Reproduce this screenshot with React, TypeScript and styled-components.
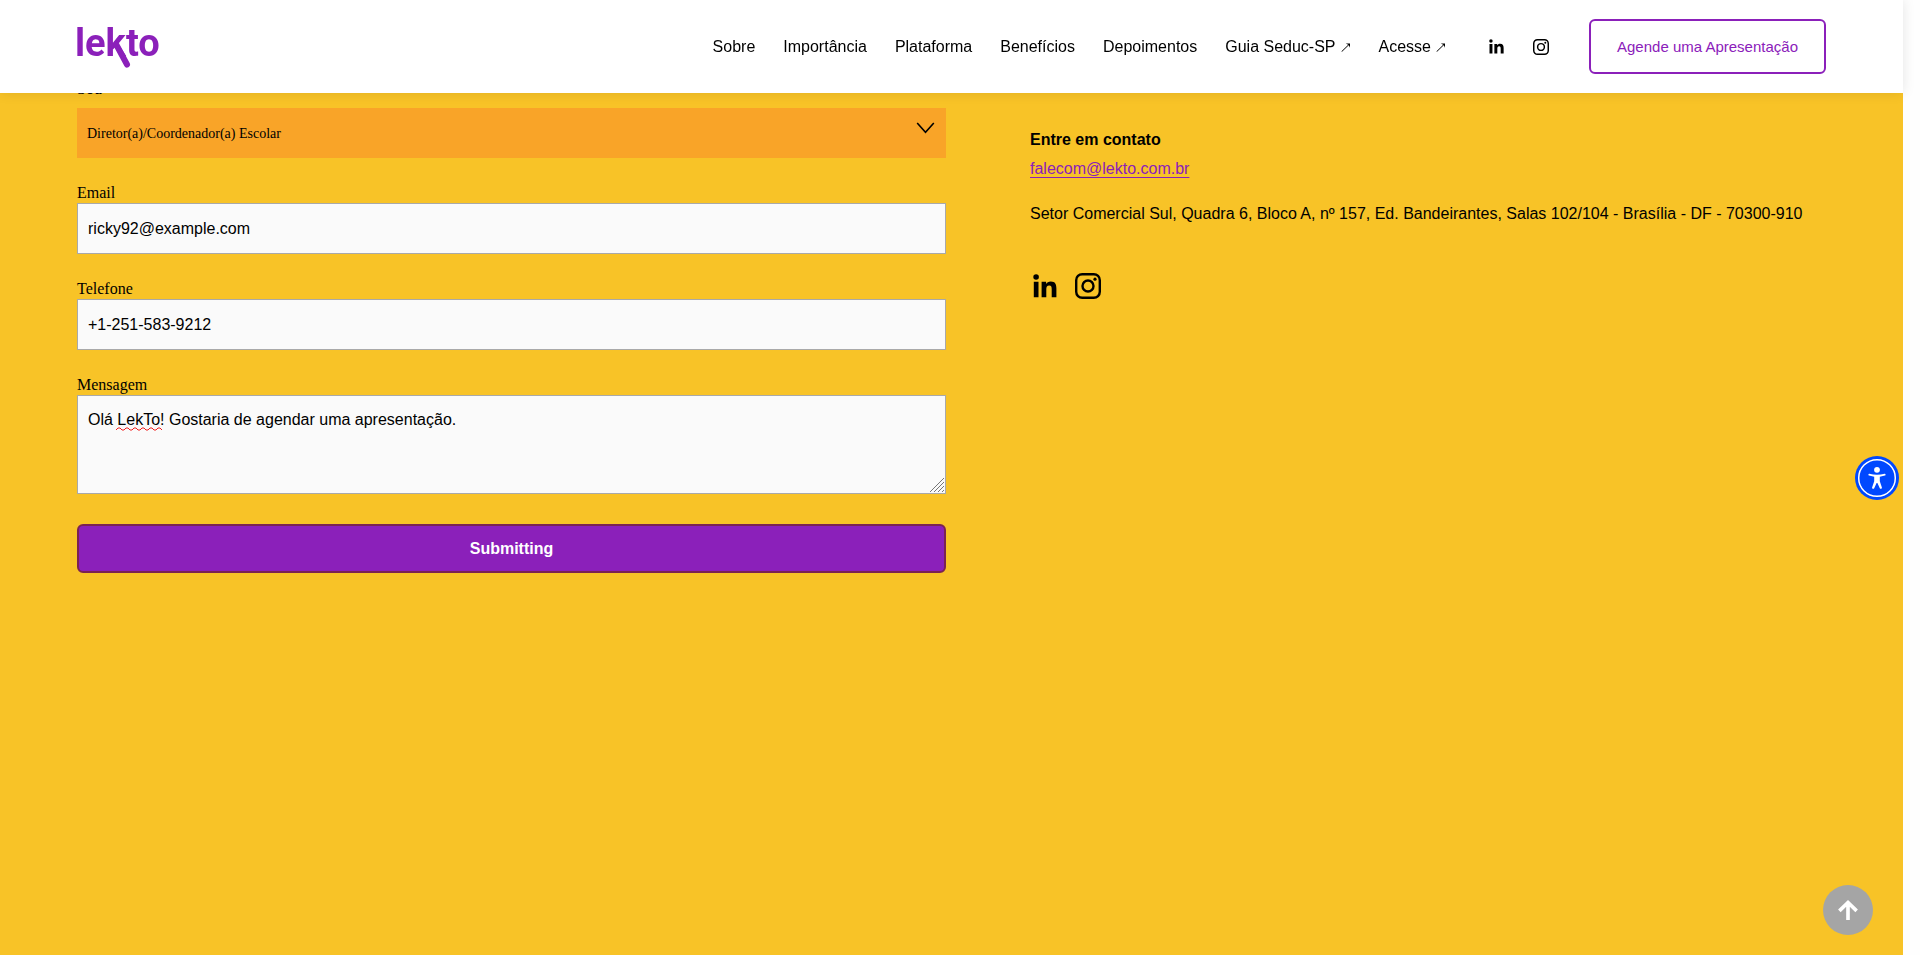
import React from 'react';
import styled, { createGlobalStyle } from 'styled-components';

const purple = '#8b20ba';
const gutter = 17;

const GlobalStyle = createGlobalStyle`
  *, *::before, *::after { box-sizing: border-box; }
  body {
    margin: 0;
    background: #fefefe;
    color: #000;
    font-family: 'Liberation Sans', Arial, sans-serif;
    font-size: 16px;
  }
`;

const Header = styled.header`
  position: fixed;
  z-index: 2;
  top: 0;
  left: 0;
  right: ${gutter}px;
  min-height: 93px;
  padding: 0 77px 0 75px;
  display: flex;
  align-items: center;
  justify-content: space-between;
  background: #fff;
  box-shadow: 0 0 12px rgba(0, 0, 0, 0.1);
`;

const LogoLink = styled.a`
  display: flex;
  text {
    font-family: Roboto, sans-serif;
    font-size: 38px;
    font-weight: 700;
  }
`;

const HeaderActions = styled.div`
  display: flex;
  align-items: center;
`;

const Nav = styled.nav`
  display: flex;
  gap: 28px;
  margin-right: 43px;
`;

const NavLink = styled.a`
  display: flex;
  align-items: center;
  gap: 5px;
  padding-top: 1px;
  color: #000;
  line-height: 20px;
  white-space: nowrap;
  text-decoration: none;
`;

const SocialLinks = styled.div<{ $gap: number }>`
  display: flex;
  align-items: center;
  gap: ${({ $gap }) => $gap}px;
`;

const SocialLink = styled.a`
  display: flex;
  color: #000;
`;

const OutlineButton = styled.button`
  height: 55px;
  width: 237px;
  margin-left: 40px;
  padding: 0;
  border: 2px solid ${purple};
  border-radius: 6px;
  background: #fff;
  color: ${purple};
  font: 15px/20px 'Liberation Sans', Arial, sans-serif;
  cursor: pointer;
`;

const Main = styled.main`
  min-height: 100vh;
  margin-right: ${gutter}px;
  padding: 79px 77px;
  display: grid;
  grid-template-columns: 869fr 796fr;
  column-gap: 84px;
  align-items: start;
  background: #f8c327;
`;

const Form = styled.form`
  display: flex;
  flex-direction: column;
  gap: 25px;
`;

const Field = styled.div<{ $gap?: number }>`
  display: flex;
  flex-direction: column;
  gap: ${({ $gap = 0 }) => $gap}px;
`;

const Label = styled.label`
  font: 16px/20px 'Liberation Serif', 'Times New Roman', serif;
`;

const ControlWrap = styled.div`
  position: relative;
  display: flex;
`;

const Select = styled.select`
  appearance: none;
  width: 100%;
  height: 50px;
  padding: 2px 10px 0;
  border: 0;
  border-radius: 0;
  background: #f9a428;
  color: #000;
  font: 14px/20px 'Liberation Serif', 'Times New Roman', serif;
`;

const Chevron = styled.svg`
  position: absolute;
  top: 14px;
  right: 11px;
  pointer-events: none;
`;

const Input = styled.input`
  width: 100%;
  height: 51px;
  padding: 0 10px;
  border: 1px solid #a9a9a9;
  border-radius: 0;
  background: #fafafa;
  color: #000;
  font: 16px/20px 'Liberation Sans', Arial, sans-serif;
`;

const TextArea = styled.textarea`
  width: 100%;
  height: 99px;
  padding: 14px 10px;
  border: 1px solid #a9a9a9;
  border-radius: 0;
  background: #fafafa;
  color: #000;
  font: 16px/20px 'Liberation Sans', Arial, sans-serif;
  resize: vertical;
  &::-webkit-resizer {
    background: transparent;
  }
`;

const ResizeGrip = styled.svg`
  position: absolute;
  right: 2px;
  bottom: 2px;
  pointer-events: none;
`;

const SpellingMark = styled.svg`
  position: absolute;
  left: 39px;
  top: 32px;
  pointer-events: none;
`;

const SubmitButton = styled.button`
  height: 49px;
  margin-top: 5px;
  border: 2px solid #7b2352;
  border-radius: 6px;
  background: ${purple};
  color: #fff;
  font: 700 16px/20px 'Liberation Sans', Arial, sans-serif;
  cursor: pointer;
`;

const Contact = styled.section`
  padding-top: 46px;
  line-height: 29px;
`;

const ContactTitle = styled.h2`
  margin: 0;
  font-size: 16px;
  line-height: 29px;
`;

const Paragraph = styled.p`
  margin: 0 0 16px;
`;

const MailLink = styled.a`
  color: ${purple};
  text-decoration: underline;
  text-decoration-thickness: 1px;
  text-underline-offset: 3px;
`;

const ContactSocial = styled.div`
  margin-top: 45px;
  padding-left: 3px;
`;

const AccessibilityButton = styled.button`
  position: fixed;
  z-index: 3;
  right: 21px;
  top: calc(50% - 22px);
  width: 44px;
  height: 44px;
  padding: 0;
  border: 0;
  border-radius: 50%;
  background: #0048ff;
  cursor: pointer;
`;

const TopButton = styled.button`
  position: fixed;
  z-index: 3;
  right: 47px;
  bottom: 20px;
  width: 50px;
  height: 50px;
  padding: 0;
  display: grid;
  place-items: center;
  border: 0;
  border-radius: 50%;
  background: #a5a5a5;
  cursor: pointer;
`;

const LinkedInIcon = ({ size }: { size: number }) => (
  <svg width={size} height={size} viewBox="0 0 24 24" fill="currentColor" aria-hidden="true">
    <circle cx="3.1" cy="3" r="2.8" />
    <path d="M.8 7.8h4.7v15.4H.8zM8.6 7.8h4.5v2.1c.8-1.4 2.4-2.5 4.7-2.5 4.5 0 5.6 2.8 5.6 7v8.8h-4.7v-7.8c0-2.2-.3-3.9-2.5-3.9s-2.9 1.6-2.9 3.8v7.9H8.6z" />
  </svg>
);

const InstagramIcon = ({ size }: { size: number }) => (
  <svg width={size} height={size} viewBox="0 0 26 26" fill="none" stroke="currentColor" strokeWidth="2.4" aria-hidden="true">
    <rect x="1.2" y="1.2" width="23.6" height="23.6" rx="6" />
    <circle cx="13" cy="13" r="5.5" />
    <circle cx="20" cy="6.2" r="1.6" fill="currentColor" stroke="none" />
  </svg>
);

const ExternalArrow = () => (
  <svg width="10" height="9" viewBox="0 0 10 9" aria-hidden="true">
    <path d="M.6 8.700 8 1.500" stroke="#000" strokeWidth="1" />
    <path d="M4.800.5h4.200v4.200L7.700 2z" fill="#000" />
  </svg>
);

const navItems = [
  { label: 'Sobre' },
  { label: 'Importância' },
  { label: 'Plataforma' },
  { label: 'Benefícios' },
  { label: 'Depoimentos' },
  { label: 'Guia Seduc-SP', external: true },
  { label: 'Acesse', external: true },
];

const Social = ({ linkedIn, instagram, gap }: { linkedIn: number; instagram: number; gap: number }) => (
  <SocialLinks $gap={gap}>
    <SocialLink href="#linkedin" aria-label="LinkedIn"><LinkedInIcon size={linkedIn} /></SocialLink>
    <SocialLink href="#instagram" aria-label="Instagram"><InstagramIcon size={instagram} /></SocialLink>
  </SocialLinks>
);

export default function App() {
  return (
    <>
      <GlobalStyle />
      <Header>
        <LogoLink href="#" aria-label="lekto">
          <svg width="90" height="54" viewBox="0 0 90 54" fill={purple} aria-hidden="true">
            <text x="0" y="36">lekto</text>
            <path d="M41.500 25 52 44.500" stroke={purple} strokeWidth="6" strokeLinecap="round" />
          </svg>
        </LogoLink>
        <HeaderActions>
          <Nav>
            {navItems.map(({ label, external }) => (
              <NavLink key={label} href="#">
                {label}
                {external && <ExternalArrow />}
              </NavLink>
            ))}
          </Nav>
          <Social linkedIn={15} instagram={16} gap={29} />
          <OutlineButton type="button">Agende uma Apresentação</OutlineButton>
        </HeaderActions>
      </Header>

      <Main>
        <Form onSubmit={(event) => event.preventDefault()}>
          <Field $gap={9}>
            <Label htmlFor="role">Sou</Label>
            <ControlWrap>
              <Select id="role">
                <option>Diretor(a)/Coordenador(a) Escolar</option>
              </Select>
              <Chevron width="19" height="12" viewBox="0 0 19 12" fill="none" stroke="#000" strokeWidth="1.6" aria-hidden="true">
                <path d="M1.200 1 9.500 10.200 17.800 1" />
              </Chevron>
            </ControlWrap>
          </Field>
          <Field>
            <Label htmlFor="email">Email</Label>
            <Input id="email" type="email" defaultValue="ricky92@example.com" />
          </Field>
          <Field>
            <Label htmlFor="phone">Telefone</Label>
            <Input id="phone" type="tel" defaultValue="+1-251-583-9212" />
          </Field>
          <Field>
            <Label htmlFor="message">Mensagem</Label>
            <ControlWrap>
              <TextArea id="message" spellCheck={false} defaultValue="Olá LekTo! Gostaria de agendar uma apresentação." />
              <SpellingMark width="46" height="4" viewBox="0 0 46 4" fill="none" stroke="#f02020" aria-hidden="true">
                <path d="M0 3 L2 1 L4 1 L6 3 L8 3 L10 1 L12 1 L14 3 L16 3 L18 1 L20 1 L22 3 L24 3 L26 1 L28 1 L30 3 L32 3 L34 1 L36 1 L38 3 L40 3 L42 1 L44 1 L46 3" />
              </SpellingMark>
              <ResizeGrip width="14" height="14" viewBox="0 0 14 14" stroke="#777" aria-hidden="true">
                <path d="M0 14 14 0M4 14 14 4M8 14l6-6M12 14l2-2" />
              </ResizeGrip>
            </ControlWrap>
          </Field>
          <SubmitButton type="submit">Submitting</SubmitButton>
        </Form>

        <Contact>
          <ContactTitle>Entre em contato</ContactTitle>
          <Paragraph>
            <MailLink href="mailto:falecom@lekto.com.br">falecom@lekto.com.br</MailLink>
          </Paragraph>
          <Paragraph>
            Setor Comercial Sul, Quadra 6, Bloco A, nº 157, Ed. Bandeirantes, Salas 102/104 - Brasília - DF - 70300-910
          </Paragraph>
          <ContactSocial>
            <Social linkedIn={24} instagram={26} gap={18} />
          </ContactSocial>
        </Contact>
      </Main>

      <AccessibilityButton type="button" aria-label="Acessibilidade">
        <svg width="44" height="44" viewBox="0 0 44 44" fill="#fff" aria-hidden="true">
          <circle cx="22" cy="22" r="18.3" fill="none" stroke="#fff" strokeWidth="1.5" />
          <circle cx="22" cy="13.8" r="2.9" />
          <path d="M14.3 17.8c5 1.3 10.4 1.3 15.4 0 .9-.2 1.3 1.5.3 1.8l-5.200 1.100v4.600l2.100 6.200c.4 1.200-1.600 1.900-2.100.8L22.400 27h-.8l-2.400 5.300c-.5 1.100-2.500.4-2.100-.8l2.100-6.200v-4.600L14 19.600c-1-.3-.6-2 .3-1.800z" />
        </svg>
      </AccessibilityButton>
      <TopButton type="button" aria-label="Voltar ao topo">
        <svg width="20" height="20" viewBox="0 0 22 22" fill="none" stroke="#fff" strokeWidth="4" aria-hidden="true">
          <path d="M11 22V3M1.500 12 11 2.800 20.500 12" />
        </svg>
      </TopButton>
    </>
  );
}
